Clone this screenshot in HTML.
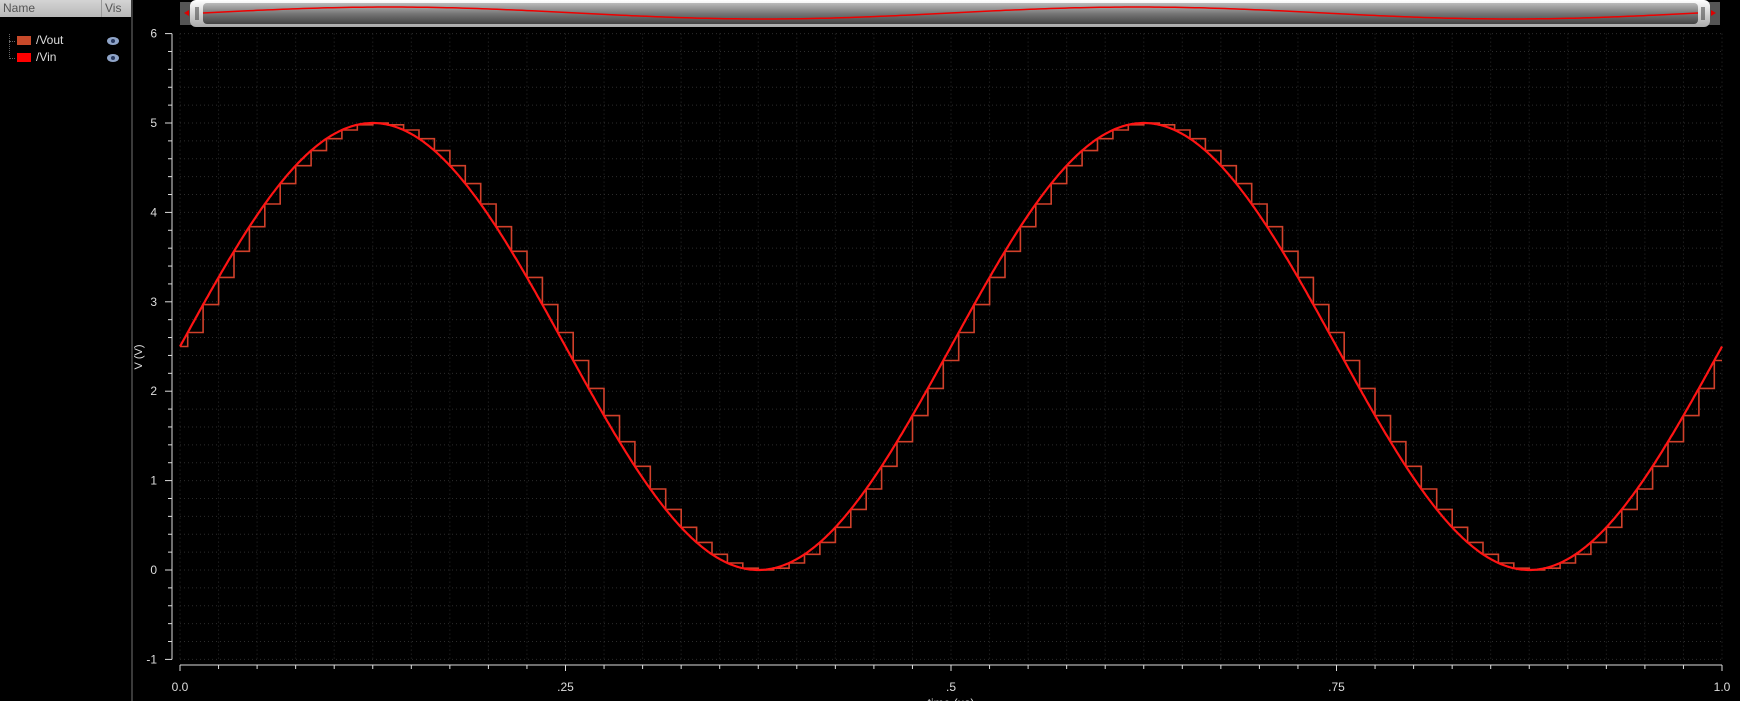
<!DOCTYPE html>
<html><head><meta charset="utf-8"><style>
html,body{margin:0;padding:0;background:#000;width:1740px;height:701px;overflow:hidden;font-family:"Liberation Sans",sans-serif}
#left{position:absolute;left:0;top:0;width:131px;height:701px;background:#000;border-right:2px solid #3a3a3a}
#hdr{position:absolute;left:0;top:0;width:131px;height:17px;background:linear-gradient(#d4d4d4,#b8b8b8);color:#555;font-size:12px}
svg{position:absolute;left:0;top:0}
</style></head><body>
<div id="left">
<div id="hdr"><span style="position:absolute;left:3px;top:1px">Name</span><span style="position:absolute;left:101px;top:0;width:1px;height:17px;background:#999"></span><span style="position:absolute;left:105px;top:1px">Vis</span></div>
<div style="position:absolute;left:9px;top:34px;width:1px;height:25px;border-left:1px dotted #666"></div>
<div style="position:absolute;left:9px;top:41px;width:6px;border-top:1px dotted #666"></div>
<div style="position:absolute;left:9px;top:58px;width:6px;border-top:1px dotted #666"></div>
<div style="position:absolute;left:17px;top:36px;width:14px;height:9px;background:#c84a2a"></div>
<div style="position:absolute;left:17px;top:53px;width:14px;height:9px;background:#ff0000"></div>
<div style="position:absolute;left:36px;top:33px;color:#ddd;font-size:12px">/Vout</div>
<div style="position:absolute;left:36px;top:50px;color:#ddd;font-size:12px">/Vin</div>
<div style="position:absolute;left:107px;top:37px;width:12px;height:8px;border-radius:50%;background:#8fa4c8"><div style="margin:2px 4px;width:4px;height:4px;border-radius:50%;background:#2a3a60"></div></div>
<div style="position:absolute;left:107px;top:54px;width:12px;height:8px;border-radius:50%;background:#8fa4c8"><div style="margin:2px 4px;width:4px;height:4px;border-radius:50%;background:#2a3a60"></div></div>
</div>
<svg id="s" width="1740" height="701" xmlns="http://www.w3.org/2000/svg" style="left:0">
<defs><linearGradient id="g" x1="0" y1="0" x2="0" y2="1"><stop offset="0" stop-color="#bbb"/><stop offset=".5" stop-color="#777"/><stop offset="1" stop-color="#444"/></linearGradient>
<linearGradient id="k" x1="0" y1="0" x2="0" y2="1"><stop offset="0" stop-color="#fff"/><stop offset="1" stop-color="#aaa"/></linearGradient></defs>
<rect x="180" y="2" width="1540" height="23" fill="#555"/>
<rect x="190" y="0" width="1520" height="27" rx="6" fill="url(#k)"/>
<rect x="203" y="3" width="1495" height="21" rx="4" fill="url(#g)"/>
<polygon points="184,13 189,10 189,16" fill="#d00"/>
<polygon points="1716,13 1711,10 1711,16" fill="#d00"/>
<line x1="196" y1="7" x2="196" y2="20" stroke="#333"/><line x1="198" y1="7" x2="198" y2="20" stroke="#333"/>
<line x1="1702" y1="7" x2="1702" y2="20" stroke="#333"/><line x1="1704" y1="7" x2="1704" y2="20" stroke="#333"/>
<g id="grid"></g>
<g id="ax" stroke="#ddd" fill="none"></g>
<g id="lab" fill="#ddd" font-size="12" font-family="Liberation Sans, sans-serif"></g>
<text x="142" y="357" fill="#ddd" font-size="11" font-family="Liberation Sans, sans-serif" transform="rotate(-90 142 357)" text-anchor="middle">V (V)</text>
<text x="951" y="707" fill="#ddd" font-size="12" font-family="Liberation Sans, sans-serif" text-anchor="middle">time (us)</text>
<path id="mini" fill="none" stroke="#e00" stroke-width="1.5"/>
<path id="vout" fill="none" stroke="#d0402a" stroke-width="1.6"/>
<path id="vin" fill="none" stroke="#ff1414" stroke-width="2.2"/>
</svg>
<script>
var X0=180,X1=1722,Y0=570,PV=89.4;
function X(t){return X0+(X1-X0)*t}function Y(v){return Y0-PV*v}
function vin(t){return 2.5+2.5*Math.sin(2*Math.PI*2*t)}
var g="";
for(var i=0;i<=40;i++){var x=X(i/40);g+='<line x1="'+x+'" y1="'+Y(6)+'" x2="'+x+'" y2="'+Y(-1)+'" stroke="#2c2c2c" stroke-dasharray="1,3"/>';}
for(var j=0;j<=35;j++){var y=Y(-1+j*0.2);g+='<line x1="'+X0+'" y1="'+y+'" x2="'+X1+'" y2="'+y+'" stroke="#2c2c2c" stroke-dasharray="1,3"/>';}
document.getElementById('grid').innerHTML=g;
var a='<line x1="172" y1="'+Y(6)+'" x2="172" y2="'+Y(-1)+'"/><line x1="'+X0+'" y1="665" x2="'+X1+'" y2="665"/>';
for(j=0;j<=35;j++){var y=Y(-1+j*0.2);a+='<line x1="'+(j%5?168:165)+'" y1="'+y+'" x2="172" y2="'+y+'"/>';}
for(i=0;i<=40;i++){var x=X(i/40);a+='<line x1="'+x+'" y1="665" x2="'+x+'" y2="'+(i%10?669:671)+'"/>';}
document.getElementById('ax').innerHTML=a;
var l='';for(var v=-1;v<=6;v++)l+='<text x="157" y="'+(Y(v)+4)+'" text-anchor="end">'+v+'</text>';
var tl=['0.0','.25','.5','.75','1.0'];for(i=0;i<5;i++)l+='<text x="'+X(i/4)+'" y="691" text-anchor="middle">'+tl[i]+'</text>';
document.getElementById('lab').innerHTML=l;
var p='M'+X(0)+' '+Y(vin(0));for(i=1;i<=1000;i++){var t=i/1000;p+='L'+X(t).toFixed(1)+' '+Y(vin(t)).toFixed(1);}
document.getElementById('vin').setAttribute('d',p);
var cur=2.5,q='M'+X(0)+' '+Y(cur);
for(i=0;i<100;i++){var t=0.005+i*0.01;q+='L'+X(t).toFixed(1)+' '+Y(cur).toFixed(1);cur=vin(t);q+='L'+X(t).toFixed(1)+' '+Y(cur).toFixed(1);}
q+='L'+X(1)+' '+Y(cur).toFixed(1);
document.getElementById('vout').setAttribute('d',q);
var m='';for(i=0;i<=300;i++){var t=i/300;m+=(i?'L':'M')+(203+1495*t).toFixed(1)+' '+(13-6*Math.sin(2*Math.PI*2*t)).toFixed(1);}
document.getElementById('mini').setAttribute('d',m);
</script>
</body></html>
